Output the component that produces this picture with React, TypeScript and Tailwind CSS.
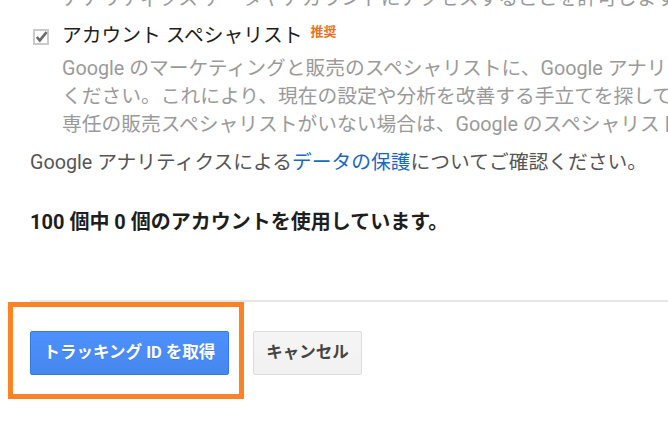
import React from 'react';

const font = "font-['Roboto','Noto_Sans_CJK_JP',sans-serif]";

const CheckIcon: React.FC = () => (
  <svg viewBox="0 0 16 16" className="w-[16px] h-[16px]">
    <rect x="1" y="1" width="14" height="14" fill="#fff" stroke="#cacaca" strokeWidth="2" />
    <path d="M3.8 8 L6.8 11.4 L13.6 3.2" fill="none" stroke="#6a6a6a" strokeWidth="2.6" />
  </svg>
);

export default function App() {
  return (
    <div className={`${font} w-[668px] h-[425px] overflow-hidden bg-white pl-[30px]`}>
      {/* previous option, cut off at the top */}
      <div className="-mt-[15px] pl-[32px] text-[19.75px] leading-[28px] text-[#9a9a9a] whitespace-nowrap">
        アナリティクス データやアカウントにアクセスすることを許可します
      </div>

      {/* account specialist option */}
      <div className="mt-[9px] flex items-start">
        <div className="ml-[3px] mt-[7px] w-[29px] shrink-0">
          <CheckIcon />
        </div>
        <div className="min-w-0">
          <div className="flex items-start text-[19.75px] leading-[28px] text-[#1e1e1e] whitespace-nowrap">
            <span>アカウント スペシャリスト</span>
            <span className="ml-[8px] mt-[1px] text-[13px] leading-[18px] font-bold text-[#e8731e]">推奨</span>
          </div>
          <div className="mt-[5px] text-[19.75px] leading-[28px] text-[#9a9a9a] whitespace-nowrap">
            <p>Google のマーケティングと販売のスペシャリストに、Google アナリティクスのデータへのアクセスを許可して</p>
            <p>ください。これにより、現在の設定や分析を改善する手立てを探してもらえます。</p>
            <p>専任の販売スペシャリストがいない場合は、Google のスペシャリストが対応します。</p>
          </div>
        </div>
      </div>

      <p className="mt-[10px] text-[19.75px] leading-[28px] text-[#555] whitespace-nowrap">
        Google アナリティクスによる<span className="text-[#1a67c4]">データの保護</span>についてご確認ください。
      </p>

      <p className="mt-[31px] text-[20px] leading-[28px] font-bold text-[#1e1e1e] whitespace-nowrap">
        100 個中 0 個のアカウントを使用しています。
      </p>

      <div className="mt-[64px] border-t-2 border-[#e6e6e6]" />

      <div className="relative mt-[29px] flex items-center gap-[24px]">
        <button className="h-[44px] w-[199px] rounded-[2px] border border-[#3079ed] bg-gradient-to-b from-[#4d90fe] to-[#4787ed] text-[16.5px] font-bold text-white [text-shadow:0_1px_0_rgba(0,0,0,0.1)]">
          トラッキング ID を取得
        </button>
        <button className="h-[44px] w-[109px] rounded-[2px] border border-[#dcdcdc] bg-gradient-to-b from-[#f5f5f5] to-[#f1f1f1] text-[16.5px] font-bold text-[#444]">
          キャンセル
        </button>
        <div className="absolute left-[-22px] top-[-29px] w-[236px] h-[97px] border-[5px] border-[#fc8127] pointer-events-none" />
      </div>
    </div>
  );
}
